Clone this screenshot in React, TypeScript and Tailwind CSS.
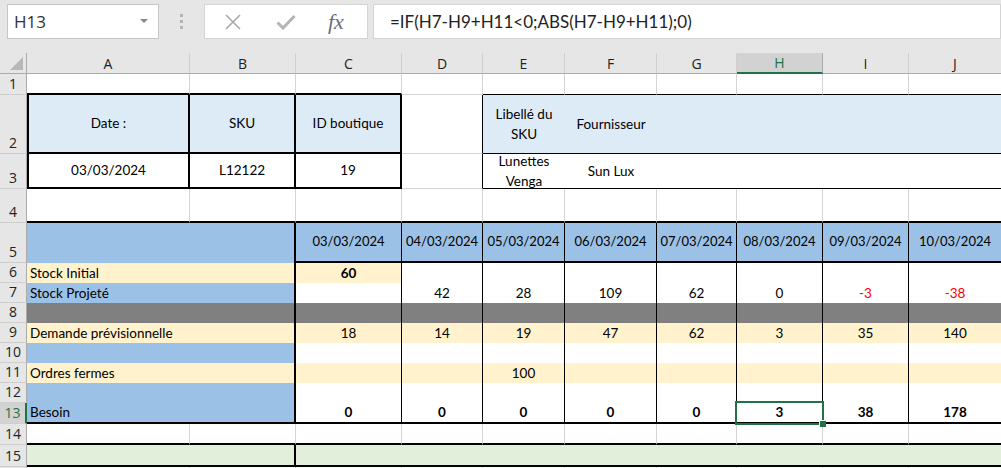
import React from 'react';

type CellDef = { c: string; t?: React.ReactNode; s?: number; sel?: boolean };

const GRID = 'border-r border-b border-[#d4d4d4]';
const R1ABC = 'border-r border-r-[#d4d4d4] border-b-2 border-b-black';
const R1EJ = 'border-r border-r-[#d4d4d4] border-b border-b-black';
const CTR = 'flex items-center justify-center text-center';
const LBL = 'flex items-center justify-start pl-[3px]';

const CREAM = 'bg-[#fff2cc]';
const BLUE = 'bg-[#9bc2e6]';
const GREY = 'bg-[#808080]';
const WHITE = 'bg-white';

function bodyRow(
  label: string,
  abBg: string,
  cBg: string,
  restBg: string,
  values: (string | null)[],
  opts: { bold?: boolean; last?: boolean; red?: number[] } = {}
): CellDef[] {
  const bottom = opts.last ? ' border-b-2 border-b-black' : '';
  const cells: CellDef[] = [
    { c: `${abBg} ${LBL} border-r-2 border-r-black${bottom}`, t: label, s: 2 },
  ];
  values.forEach((v, i) => {
    const bg = i === 0 ? cBg : restBg;
    const red = opts.red && opts.red.includes(i) ? ' text-[#ff0000]' : '';
    const bold = opts.bold ? ' font-bold' : '';
    cells.push({
      c: `${bg} ${CTR} border-r border-r-black${bottom}${red}${bold}`,
      t: v ?? '',
      sel: opts.last && i === 5,
    });
  });
  return cells;
}

const dates = [
  '03/03/2024',
  '04/03/2024',
  '05/03/2024',
  '06/03/2024',
  '07/03/2024',
  '08/03/2024',
  '09/03/2024',
  '10/03/2024',
];

const rows: CellDef[][] = [
  // row 1
  [
    { c: R1ABC },
    { c: R1ABC },
    { c: R1ABC },
    { c: GRID },
    { c: R1EJ },
    { c: R1EJ },
    { c: R1EJ },
    { c: R1EJ },
    { c: R1EJ },
    { c: R1EJ },
  ],
  // row 2
  [
    { c: `bg-[#ddebf7] border-l-2 border-r-2 border-b-2 border-black ${CTR}`, t: 'Date :' },
    { c: `bg-[#ddebf7] border-r-2 border-b-2 border-black ${CTR}`, t: 'SKU' },
    { c: `bg-[#ddebf7] border-r-2 border-b-2 border-black ${CTR}`, t: 'ID boutique' },
    { c: 'border-r border-r-black border-b border-b-[#d4d4d4]' },
    {
      c: `bg-[#ddebf7] border-b border-black ${CTR} leading-[20px]`,
      t: (
        <span>
          Libellé du
          <br />
          SKU
        </span>
      ),
    },
    { c: `bg-[#ddebf7] border-b border-black ${CTR}`, t: 'Fournisseur' },
    { c: 'bg-[#ddebf7] border-b border-black' },
    { c: 'bg-[#ddebf7] border-b border-black' },
    { c: 'bg-[#ddebf7] border-b border-black' },
    { c: 'bg-[#ddebf7] border-b border-black' },
  ],
  // row 3
  [
    { c: `border-l-2 border-r-2 border-b-2 border-black ${CTR}`, t: '03/03/2024' },
    { c: `border-r-2 border-b-2 border-black ${CTR}`, t: 'L12122' },
    { c: `border-r-2 border-b-2 border-black ${CTR}`, t: '19' },
    { c: 'border-r border-r-black border-b border-b-[#d4d4d4]' },
    {
      c: `border-b border-black ${CTR} leading-[20px] overflow-hidden`,
      t: (
        <span>
          Lunettes
          <br />
          Venga
        </span>
      ),
    },
    { c: `border-b border-black ${CTR}`, t: 'Sun Lux' },
    { c: 'border-b border-black' },
    { c: 'border-b border-black' },
    { c: 'border-b border-black' },
    { c: 'border-b border-black' },
  ],
  // row 4
  Array.from({ length: 10 }, () => ({ c: R1ABC })),
  // row 5
  [
    { c: `${BLUE} border-r-2 border-r-black`, s: 2 },
    ...dates.map((d) => ({
      c: `${BLUE} ${CTR} border-r border-r-black border-b-2 border-b-black text-[13px]`,
      t: d,
    })),
  ],
  // row 6
  bodyRow('Stock Initial', CREAM, `${CREAM} font-bold`, WHITE, ['60', null, null, null, null, null, null, null]),
  // row 7
  bodyRow('Stock Projeté', BLUE, WHITE, WHITE, [null, '42', '28', '109', '62', '0', '-3', '-38'], { red: [6, 7] }),
  // row 8
  bodyRow('', GREY, GREY, GREY, [null, null, null, null, null, null, null, null]),
  // row 9
  bodyRow('Demande prévisionnelle', CREAM, CREAM, CREAM, ['18', '14', '19', '47', '62', '3', '35', '140']),
  // row 10
  bodyRow('', BLUE, WHITE, WHITE, [null, null, null, null, null, null, null, null]),
  // row 11
  bodyRow('Ordres fermes', CREAM, CREAM, CREAM, [null, null, '100', null, null, null, null, null]),
  // row 12
  bodyRow('', BLUE, WHITE, WHITE, [null, null, null, null, null, null, null, null]),
  // row 13
  bodyRow('Besoin', BLUE, WHITE, WHITE, ['0', '0', '0', '0', '0', '3', '38', '178'], { bold: true, last: true }),
  // row 14
  Array.from({ length: 10 }, () => ({ c: R1ABC })),
  // row 15
  [
    { c: 'bg-[#e2efda] border-r-2 border-r-black border-b-2 border-b-black', s: 2 },
    ...Array.from({ length: 8 }, () => ({ c: 'bg-[#e2efda] border-b-2 border-b-black' })),
  ],
  // row 16
  Array.from({ length: 10 }, () => ({ c: GRID })),
];

const letters = ['A', 'B', 'C', 'D', 'E', 'F', 'G', 'H', 'I', 'J'];

function Cell({ def }: { def: CellDef }) {
  return (
    <div className={`relative min-w-0 overflow-visible whitespace-nowrap ${def.s === 2 ? 'col-span-2' : ''} ${def.c}`}>
      {def.t}
      {def.sel && (
        <div className="absolute left-[-2px] top-[-2px] w-[89px] h-[24px] border-2 border-[#217346] z-10 pointer-events-none">
          <div className="absolute right-[-4px] bottom-[-4px] w-[7px] h-[7px] bg-[#217346] border-l border-t border-white" />
        </div>
      )}
    </div>
  );
}

export default function App() {
  return (
    <div className="w-[1001px] h-[468px] overflow-hidden bg-white text-black font-['Lato',sans-serif]">
      {/* toolbar */}
      <div className="h-[53px] bg-[#e6e6e6] flex items-start pt-[4px]">
        <div className="ml-[7px] w-[152px] h-[35px] bg-white border border-[#c6c6c6] flex items-center pl-[6px] pr-[10px] justify-between">
          <span className="font-['Open_Sans',sans-serif] text-[17px] text-[#333]">H13</span>
          <svg width="8" height="5" viewBox="0 0 8 5">
            <polygon points="0,0 8,0 4,4" fill="#8a8a8a" />
          </svg>
        </div>
        <div className="w-[45px] h-[35px] flex flex-col items-center justify-center gap-[3px]">
          <div className="w-[3px] h-[3px] bg-[#b4b4b4]" />
          <div className="w-[3px] h-[3px] bg-[#b4b4b4]" />
          <div className="w-[3px] h-[3px] bg-[#b4b4b4]" />
        </div>
        <div className="w-[164px] h-[35px] bg-white border border-[#d4d4d4] flex items-center">
          <svg className="ml-[19px]" width="18" height="16" viewBox="0 0 18 16">
            <path d="M2 1 L16 15 M16 1 L2 15" stroke="#a8a8a8" strokeWidth="1.6" fill="none" />
          </svg>
          <svg className="ml-[34px]" width="20" height="16" viewBox="0 0 20 16">
            <path d="M1.5 8.5 L7 14 L18.5 2" stroke="#b4b4b4" strokeWidth="3" fill="none" />
          </svg>
          <span className="ml-[32px] font-['Liberation_Serif',serif] italic text-[22px] text-[#6e6e6e] leading-none">fx</span>
        </div>
        <div className="ml-[5px] flex-1 h-[35px] bg-white border border-[#d4d4d4] flex items-center pl-[16px]">
          <span className="text-[17px] text-[#222]">=IF(H7-H9+H11&lt;0;ABS(H7-H9+H11);0)</span>
        </div>
      </div>

      {/* sheet grid */}
      <div className="grid grid-cols-[27px_163px_106px_106px_81px_82px_92px_80px_86px_86px_93px] grid-rows-[21px_21px_59px_35px_34px_40px_20px_20px_20px_20px_20px_20px_20px_21px_21px_22px_20px] text-[13.5px]">
        {/* header row */}
        <div className="bg-[#e6e6e6] border-r border-b border-[#ababab] flex items-end justify-end pr-[3px] pb-[3px]">
          <svg width="13" height="13" viewBox="0 0 13 13">
            <polygon points="13,0 13,13 0,13" fill="#b8b8b8" />
          </svg>
        </div>
        {letters.map((l) => (
          <div
            key={l}
            className={
              l === 'H'
                ? "bg-[#d2d2d2] text-[#217346] border-r border-r-[#ababab] border-b-2 border-b-[#217346] flex items-center justify-center font-['Open_Sans',sans-serif] text-[14px]"
                : "bg-[#e6e6e6] text-[#222] border-r border-r-[#cfcfcf] border-b border-b-[#ababab] flex items-center justify-center font-['Open_Sans',sans-serif] text-[14px]"
            }
          >
            {l}
          </div>
        ))}

        {rows.map((row, ri) => (
          <React.Fragment key={ri}>
            <div
              className={
                ri === 12
                  ? "bg-[#d2d2d2] text-[#217346] border-r-2 border-r-[#217346] border-b border-b-[#cfcfcf] flex items-end justify-center font-['Open_Sans',sans-serif] text-[14px] leading-[20px]"
                  : "bg-[#e6e6e6] text-[#222] border-r border-r-[#ababab] border-b border-b-[#cfcfcf] flex items-end justify-center font-['Open_Sans',sans-serif] text-[14px] leading-[20px]"
              }
            >
              {ri < 15 ? ri + 1 : ''}
            </div>
            {row.map((cell, ci) => (
              <Cell key={ci} def={cell} />
            ))}
          </React.Fragment>
        ))}
      </div>
    </div>
  );
}
